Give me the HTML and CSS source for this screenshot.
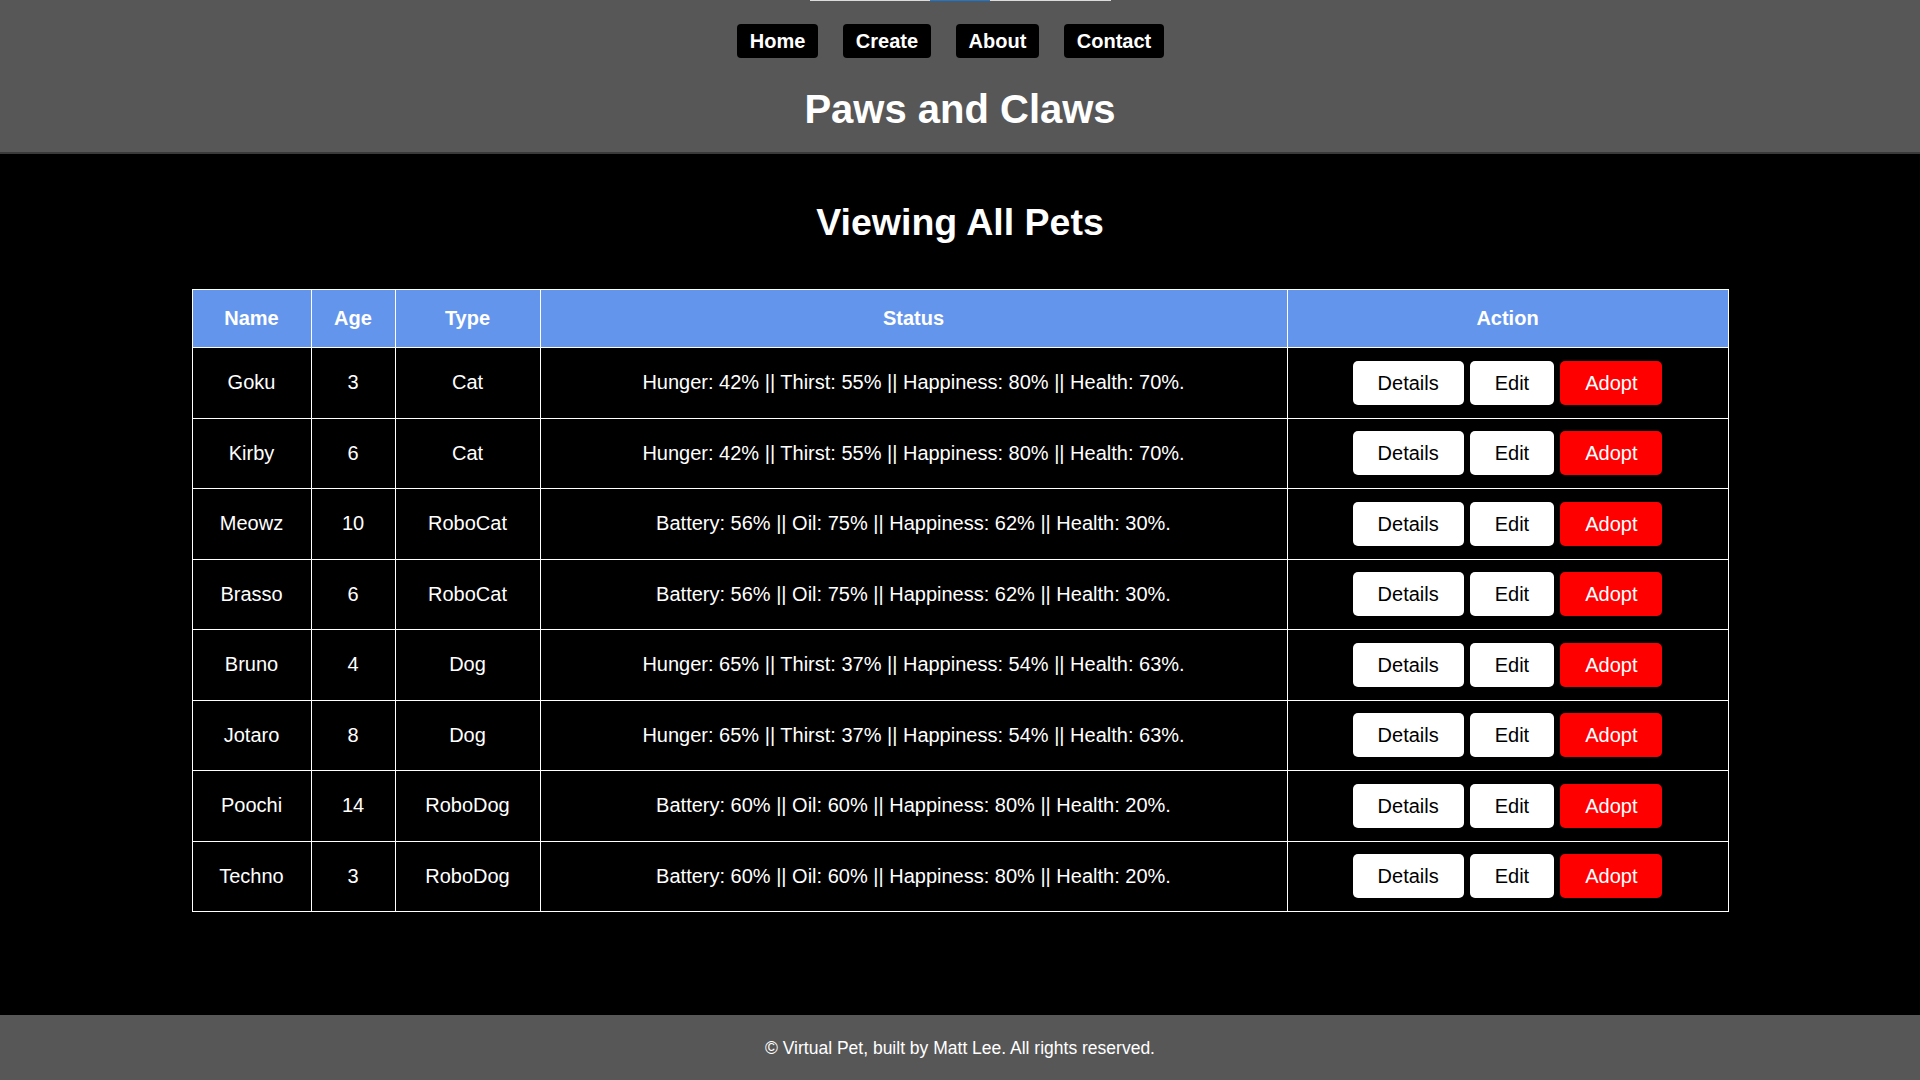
FILE: index.html
```html
<!DOCTYPE html>
<html lang="en">
<head>
<meta charset="utf-8">
<title>Paws and Claws</title>
<link rel="stylesheet" href="styles.css">
</head>
<body>
<header class="site-header">
  <div class="top-bar"><div class="top-bar-thumb"></div></div>
  <nav class="nav">
    <a class="nav-btn" href="#">Home</a>
    <a class="nav-btn" href="#">Create</a>
    <a class="nav-btn" href="#">About</a>
    <a class="nav-btn" href="#">Contact</a>
  </nav>
  <h1 class="site-title">Paws and Claws</h1>
</header>
<main class="main">
  <h2 class="page-title">Viewing All Pets</h2>
  <table class="pets">
    <colgroup>
      <col class="c-name"><col class="c-age"><col class="c-type"><col class="c-status"><col class="c-action">
    </colgroup>
    <thead>
      <tr><th>Name</th><th>Age</th><th>Type</th><th>Status</th><th>Action</th></tr>
    </thead>
    <tbody>
      <tr><td>Goku</td><td>3</td><td>Cat</td><td>Hunger: 42% || Thirst: 55% || Happiness: 80% || Health: 70%.</td><td><div class="actions"><button class="btn">Details</button><button class="btn">Edit</button><button class="btn btn-red">Adopt</button></div></td></tr>
      <tr><td>Kirby</td><td>6</td><td>Cat</td><td>Hunger: 42% || Thirst: 55% || Happiness: 80% || Health: 70%.</td><td><div class="actions"><button class="btn">Details</button><button class="btn">Edit</button><button class="btn btn-red">Adopt</button></div></td></tr>
      <tr><td>Meowz</td><td>10</td><td>RoboCat</td><td>Battery: 56% || Oil: 75% || Happiness: 62% || Health: 30%.</td><td><div class="actions"><button class="btn">Details</button><button class="btn">Edit</button><button class="btn btn-red">Adopt</button></div></td></tr>
      <tr><td>Brasso</td><td>6</td><td>RoboCat</td><td>Battery: 56% || Oil: 75% || Happiness: 62% || Health: 30%.</td><td><div class="actions"><button class="btn">Details</button><button class="btn">Edit</button><button class="btn btn-red">Adopt</button></div></td></tr>
      <tr><td>Bruno</td><td>4</td><td>Dog</td><td>Hunger: 65% || Thirst: 37% || Happiness: 54% || Health: 63%.</td><td><div class="actions"><button class="btn">Details</button><button class="btn">Edit</button><button class="btn btn-red">Adopt</button></div></td></tr>
      <tr><td>Jotaro</td><td>8</td><td>Dog</td><td>Hunger: 65% || Thirst: 37% || Happiness: 54% || Health: 63%.</td><td><div class="actions"><button class="btn">Details</button><button class="btn">Edit</button><button class="btn btn-red">Adopt</button></div></td></tr>
      <tr><td>Poochi</td><td>14</td><td>RoboDog</td><td>Battery: 60% || Oil: 60% || Happiness: 80% || Health: 20%.</td><td><div class="actions"><button class="btn">Details</button><button class="btn">Edit</button><button class="btn btn-red">Adopt</button></div></td></tr>
      <tr><td>Techno</td><td>3</td><td>RoboDog</td><td>Battery: 60% || Oil: 60% || Happiness: 80% || Health: 20%.</td><td><div class="actions"><button class="btn">Details</button><button class="btn">Edit</button><button class="btn btn-red">Adopt</button></div></td></tr>
    </tbody>
  </table>
</main>
<footer class="site-footer">
  <p class="footer-text">© Virtual Pet, built by Matt Lee. All rights reserved.</p>
</footer>
</body>
</html>
```
FILE: styles.css
```css
* { box-sizing: border-box; }

html, body {
  margin: 0;
  padding: 0;
}

body {
  min-height: 100vh;
  display: flex;
  flex-direction: column;
  background: #000;
  color: #fff;
  font-family: "Liberation Sans", Arial, sans-serif;
}

.site-header {
  background: #575757;
  border-bottom: 2px solid #3a3a3a;
  display: flex;
  flex-direction: column;
  align-items: center;
}

.top-bar {
  width: 301px;
  height: 1px;
  background: #dcdcdc;
  display: flex;
  padding-left: 120px;
}

.top-bar-thumb {
  width: 60px;
  height: 1px;
  background: #1a78d2;
}

.nav {
  display: flex;
  justify-content: center;
  gap: 24.5px;
  margin-top: 23px;
  padding-right: 19px;
}

.nav-btn {
  display: block;
  background: #000;
  color: #fff;
  text-decoration: none;
  font-weight: bold;
  font-size: 20px;
  line-height: 23px;
  padding: 5.5px 13px;
  border-radius: 4px;
}

.site-title {
  margin: 28px 0 20px;
  font-size: 40px;
  line-height: 46px;
  font-weight: bold;
  color: #fff;
}

.main {
  flex: 1;
  padding: 47px 0 0;
}

.page-title {
  margin: 0 0 45px;
  text-align: center;
  font-size: 37.5px;
  line-height: 43px;
  font-weight: bold;
}

.pets {
  width: 1536px;
  margin: 0 auto;
  border-collapse: collapse;
  table-layout: fixed;
  font-size: 20px;
}

.c-name { width: 119px; }
.c-age { width: 84px; }
.c-type { width: 145px; }
.c-status { width: 747px; }
.c-action { width: 441px; }

.pets th,
.pets td {
  border: 1px solid #fff;
  text-align: center;
  line-height: 23px;
}

.pets th {
  background: #6495ed;
  color: #fff;
  font-weight: bold;
  padding: 17px 0;
}

.pets td {
  padding: 12.75px 0;
}

.actions {
  display: flex;
  justify-content: center;
  gap: 6px;
}

.btn {
  font-family: "Liberation Sans", Arial, sans-serif;
  font-size: 20px;
  line-height: 24px;
  padding: 10px 25px;
  border: none;
  border-radius: 5px;
  background: #fff;
  color: #000;
  cursor: pointer;
}

.btn-red {
  background: #ff0000;
  color: #fff;
}

.site-footer {
  background: #575757;
  height: 65px;
  display: flex;
  align-items: center;
  justify-content: center;
}

.footer-text {
  margin: 0;
  font-size: 17.5px;
  line-height: 20px;
  color: #fff;
}
```
